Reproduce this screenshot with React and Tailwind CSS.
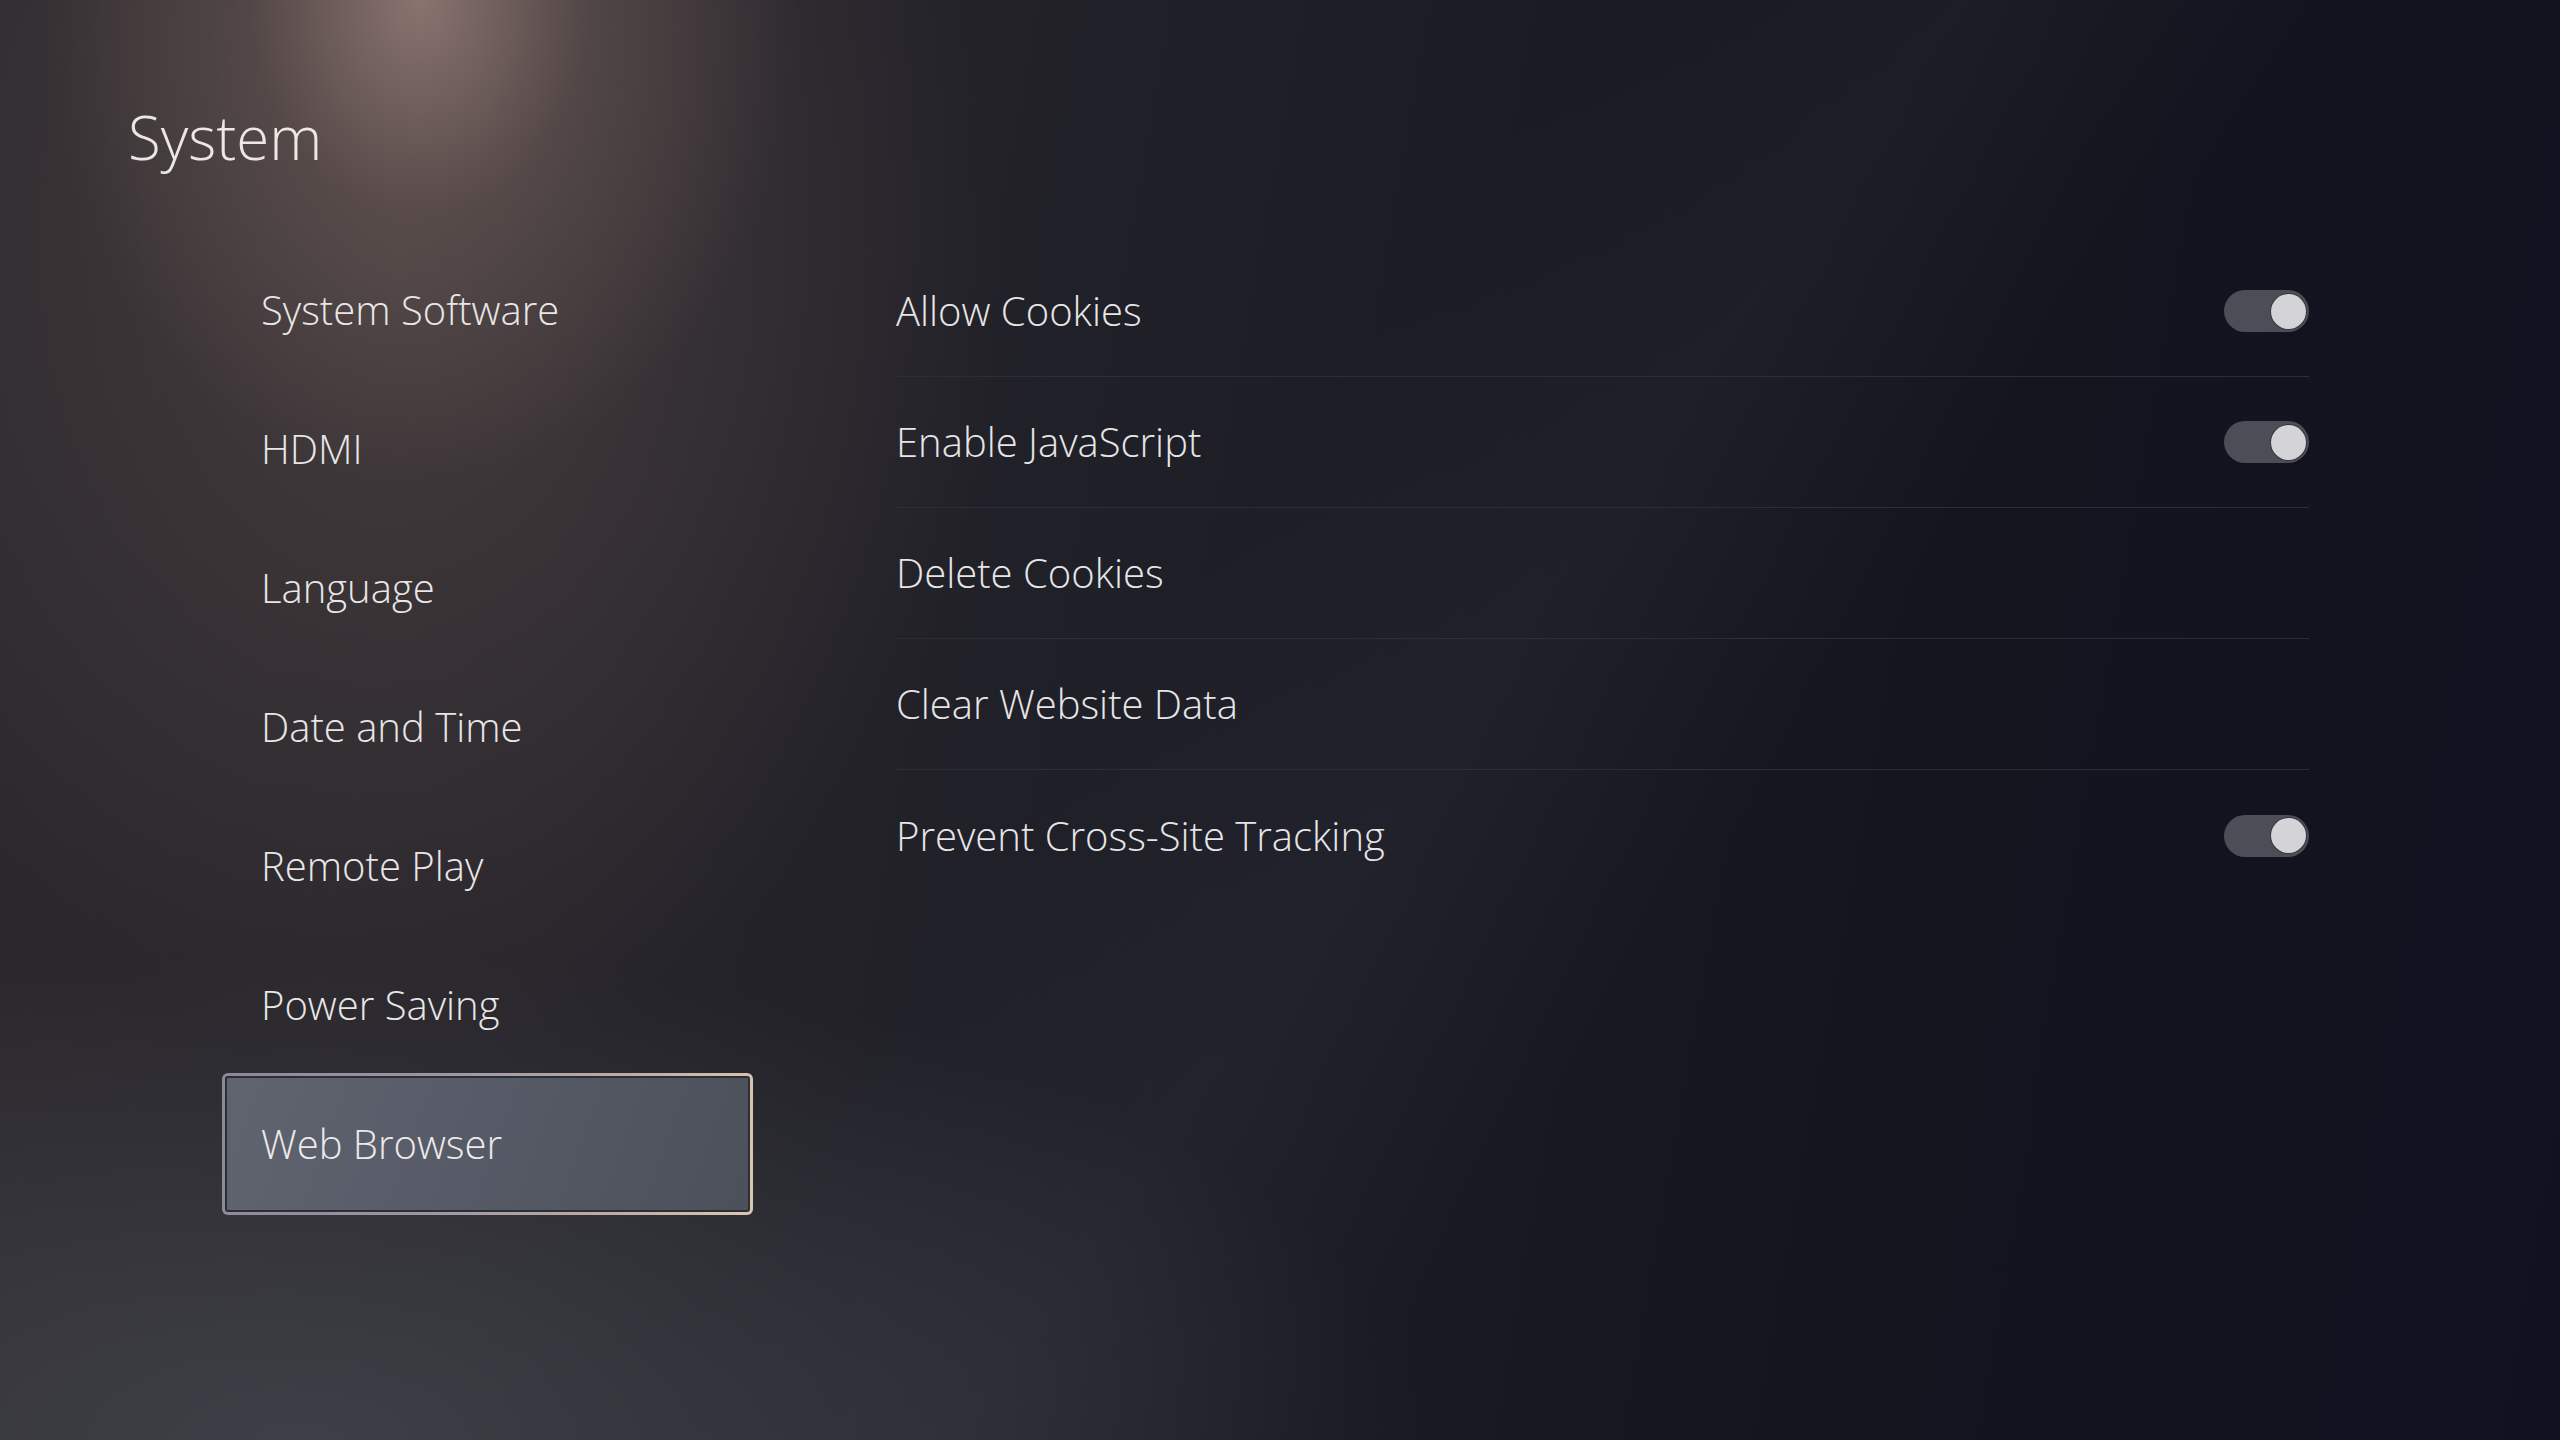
import React from 'react'

const menu = ['System Software', 'HDMI', 'Language', 'Date and Time', 'Remote Play', 'Power Saving', 'Web Browser']

const options = [
  { label: 'Allow Cookies', toggle: true },
  { label: 'Enable JavaScript', toggle: true },
  { label: 'Delete Cookies', toggle: false },
  { label: 'Clear Website Data', toggle: false },
  { label: 'Prevent Cross-Site Tracking', toggle: true },
]

function Toggle() {
  return (
    <div className="w-[85px] h-[42px] rounded-full bg-[#4b4d57] flex items-center justify-end pr-[3px]">
      <div className="w-[35px] h-[35px] rounded-full bg-[#d4d4d6] shadow-[0_0_0_1px_rgba(30,30,40,0.5)]" />
    </div>
  )
}

function MenuItem({ label, selected }) {
  if (selected) {
    return (
      <div className="h-[139px] flex items-center">
        <div className="w-full h-[142px] rounded-[6px] p-[3px] bg-[linear-gradient(100deg,#8a8a96_0%,#9a97a3_40%,#bfaea6_75%,#dcc7b0_100%)]">
          <div className="w-full h-full rounded-[3px] border-2 border-[#2c2d35] bg-[linear-gradient(110deg,#60646f_0%,#565b67_45%,#4c505a_100%)] flex items-center pl-[34px]">
            <span className="text-[40px] font-light text-[#eceaea]">{label}</span>
          </div>
        </div>
      </div>
    )
  }
  return (
    <div className="h-[139px] flex items-center pl-[39px]">
      <span className="text-[40px] font-light text-[#e8e6e6]">{label}</span>
    </div>
  )
}

export default function App() {
  return (
    <div
      className="w-full h-[1440px] overflow-hidden flex flex-col bg-[#15161e] bg-[radial-gradient(ellipse_380px_480px_at_420px_0px,rgba(150,126,120,0.85),rgba(110,92,88,0.45)_45%,transparent_100%),radial-gradient(ellipse_800px_1100px_at_400px_250px,rgba(82,70,70,0.7),transparent_75%),radial-gradient(ellipse_1500px_650px_at_300px_1440px,rgba(70,72,80,0.75),transparent_75%),linear-gradient(125deg,transparent_45%,rgba(60,62,70,0.18)_55%,transparent_65%),linear-gradient(100deg,#2c292d_0%,#27252b_25%,#1c1d26_50%,#12141e_75%,#111220_100%)]"
      style={{ fontFamily: '"Open Sans", "Noto Sans", sans-serif' }}
    >
      <h1 className="pl-[128px] pt-[107px] text-[60px] leading-none font-light text-[#ebe7e5]">System</h1>

      <div className="flex pl-[222px] mt-[73px]">
        <nav className="w-[531px] flex flex-col">
          {menu.map((m) => (
            <MenuItem key={m} label={m} selected={m === 'Web Browser'} />
          ))}
        </nav>

        <div className="ml-[143px] w-[1413px] pt-[6px] flex flex-col">
          {options.map((o, i) => (
            <div
              key={o.label}
              className={
                'h-[131px] flex items-center justify-between ' +
                (i < options.length - 1 ? 'border-b border-[#2c2e37]' : '')
              }
            >
              <span className="text-[40px] font-light text-[#e6e5e7]">{o.label}</span>
              {o.toggle && <Toggle />}
            </div>
          ))}
        </div>
      </div>
    </div>
  )
}
